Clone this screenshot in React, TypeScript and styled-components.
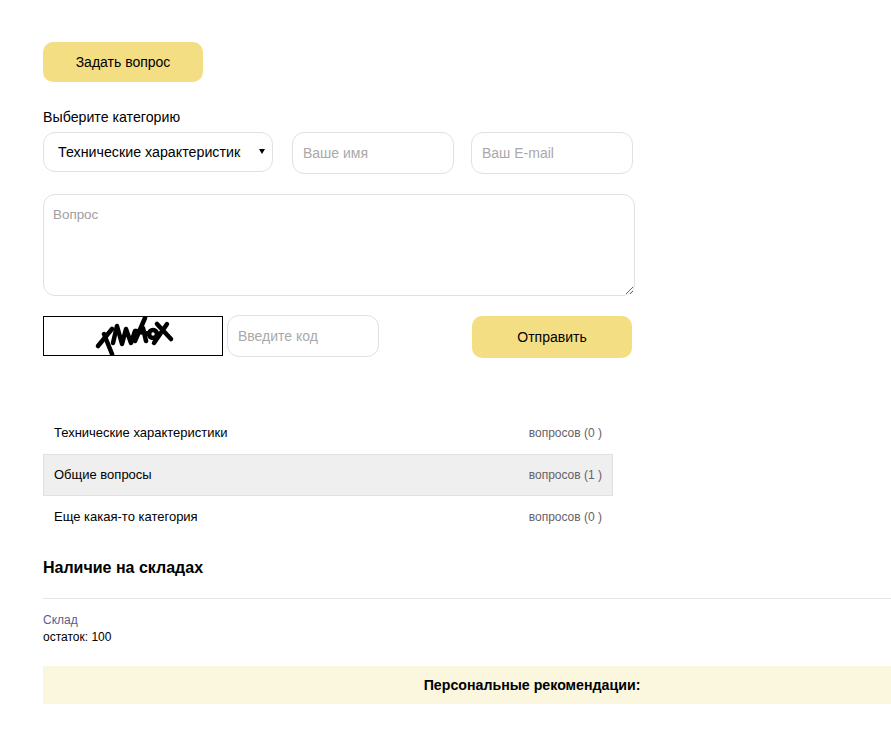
import React from 'react';
import styled, { createGlobalStyle } from 'styled-components';

const GlobalStyle = createGlobalStyle`
  html, body {
    margin: 0;
    padding: 0;
    background: #fff;
  }
  body {
    font-family: "Liberation Sans", Arial, sans-serif;
    color: #000;
  }
`;

const Page = styled.div`
  padding: 42px 0 46px 43px;
`;

const YellowButton = styled.button<{ $tall?: boolean }>`
  display: block;
  width: 160px;
  height: ${({ $tall }) => ($tall ? '42px' : '40px')};
  border: 0;
  border-radius: 10px;
  background: #f4de83;
  color: #000;
  font: 14px "Liberation Sans", Arial, sans-serif;
  padding: 0;
`;

const CategoryLabel = styled.div`
  margin-top: 27px;
  font-size: 14.2px;
  line-height: 16px;
`;

const TopRow = styled.div`
  display: flex;
  align-items: flex-start;
  margin-top: 7px;
`;

const SelectWrap = styled.div`
  position: relative;
  width: 230px;
  height: 40px;
  margin-right: 19px;

  &::after {
    content: '';
    position: absolute;
    left: 216px;
    top: 17px;
    border-style: solid;
    border-width: 5px 3.5px 0;
    border-color: #000 transparent transparent;
  }
`;

const CategorySelect = styled.select`
  appearance: none;
  box-sizing: border-box;
  width: 100%;
  height: 40px;
  padding: 0 31px 0 14px;
  border: 1px solid #e1e1e1;
  border-radius: 12px;
  background: #fff;
  color: #000;
  font: 14.25px "Liberation Sans", Arial, sans-serif;
  outline: none;
`;

const TextInput = styled.input<{ $width: number; $gap?: number }>`
  box-sizing: border-box;
  width: ${({ $width }) => $width}px;
  height: 42px;
  margin-right: ${({ $gap }) => $gap ?? 0}px;
  padding: 0 10px;
  border: 1px solid #e1e1e1;
  border-radius: 12px;
  background: #fff;
  font: 14px "Liberation Sans", Arial, sans-serif;
  outline: none;

  &::placeholder {
    color: #a9a9a9;
    opacity: 1;
  }
`;

const QuestionArea = styled.textarea`
  display: block;
  box-sizing: border-box;
  width: 592px;
  height: 102px;
  margin-top: 20px;
  padding: 12px 9px;
  border: 1px solid #e1e1e1;
  border-radius: 12px;
  background: #fff;
  font: 13.4px "Liberation Sans", Arial, sans-serif;
  outline: none;

  &::placeholder {
    color: #a0a0a0;
    opacity: 1;
  }
`;

const CaptchaRow = styled.div`
  display: flex;
  align-items: flex-start;
  margin-top: 19px;
`;

const CaptchaBox = styled.div`
  box-sizing: border-box;
  width: 180px;
  height: 40px;
  margin: 1px 4px 0 0;
  border: 1px solid #000;
  background: #fff;
  overflow: hidden;

  svg {
    display: block;
  }
`;

const SendSlot = styled.div`
  margin: 1px 0 0 93px;
`;

const CategoryList = styled.ul`
  width: 570px;
  margin: 54px 0 0;
  padding: 0;
  list-style: none;
`;

const CategoryRow = styled.li<{ $active?: boolean }>`
  box-sizing: border-box;
  display: flex;
  justify-content: space-between;
  align-items: center;
  height: 42px;
  padding: 0 10px;
  border: 1px solid ${({ $active }) => ($active ? '#e1e1e1' : 'transparent')};
  background: ${({ $active }) => ($active ? '#efefef' : 'transparent')};
`;

const CategoryName = styled.span`
  margin-bottom: 2px;
  font-size: 13px;
`;

const QuestionCount = styled.span`
  font-size: 12px;
  color: #66616b;
`;

const StockTitle = styled.h2`
  margin: 21px 0 0;
  font-size: 16px;
  line-height: 18px;
  font-weight: bold;
`;

const Divider = styled.div`
  height: 1px;
  margin-top: 21px;
  background: #e5e5e5;
`;

const StockName = styled.a`
  display: block;
  margin-top: 14px;
  font-size: 12px;
  line-height: 14px;
  color: #5b5b8f;
`;

const StockLeft = styled.div`
  margin-top: 3px;
  font-size: 12px;
  line-height: 14px;
`;

const Recommendations = styled.div`
  height: 38px;
  margin-top: 22px;
  padding-left: 130px;
  background: #fbf6de;
  font-size: 14.2px;
  font-weight: bold;
  line-height: 38px;
  text-align: center;
`;

const Captcha: React.FC = () => (
  <svg width="178" height="38" viewBox="0 0 178 38" fill="none" stroke="#000" strokeWidth="4.5" strokeLinecap="round" strokeLinejoin="round">
    <path d="M54 29 L68 12" />
    <path d="M60 17 L68 37" />
    <path d="M69 26 L73 9 L78 27 L82 12 L87 26 L91 14" />
    <path d="M91 24 L101 1 M92 14 L105 17 M99 11 L102 24" />
    <circle cx="109" cy="17" r="4" />
    <path d="M113 7 L127 22 M123 7 L110 26" />
  </svg>
);

const App: React.FC = () => {
  return (
    <Page>
      <GlobalStyle />
      <YellowButton>Задать вопрос</YellowButton>
      <CategoryLabel>Выберите категорию</CategoryLabel>
      <TopRow>
        <SelectWrap>
          <CategorySelect defaultValue="tech">
            <option value="tech">Технические характеристики</option>
            <option value="common">Общие вопросы</option>
            <option value="other">Еще какая-то категория</option>
          </CategorySelect>
        </SelectWrap>
        <TextInput $width={162} $gap={17} placeholder="Ваше имя" />
        <TextInput $width={162} placeholder="Ваш E-mail" />
      </TopRow>
      <QuestionArea placeholder="Вопрос" />
      <CaptchaRow>
        <CaptchaBox>
          <Captcha />
        </CaptchaBox>
        <TextInput $width={152} placeholder="Введите код" />
        <SendSlot>
          <YellowButton $tall>Отправить</YellowButton>
        </SendSlot>
      </CaptchaRow>
      <CategoryList>
        <CategoryRow>
          <CategoryName>Технические характеристики</CategoryName>
          <QuestionCount>вопросов (0 )</QuestionCount>
        </CategoryRow>
        <CategoryRow $active>
          <CategoryName>Общие вопросы</CategoryName>
          <QuestionCount>вопросов (1 )</QuestionCount>
        </CategoryRow>
        <CategoryRow>
          <CategoryName>Еще какая-то категория</CategoryName>
          <QuestionCount>вопросов (0 )</QuestionCount>
        </CategoryRow>
      </CategoryList>
      <StockTitle>Наличие на складах</StockTitle>
      <Divider />
      <StockName>Склад</StockName>
      <StockLeft>остаток: 100</StockLeft>
      <Recommendations>Персональные рекомендации:</Recommendations>
    </Page>
  );
};

export default App;
